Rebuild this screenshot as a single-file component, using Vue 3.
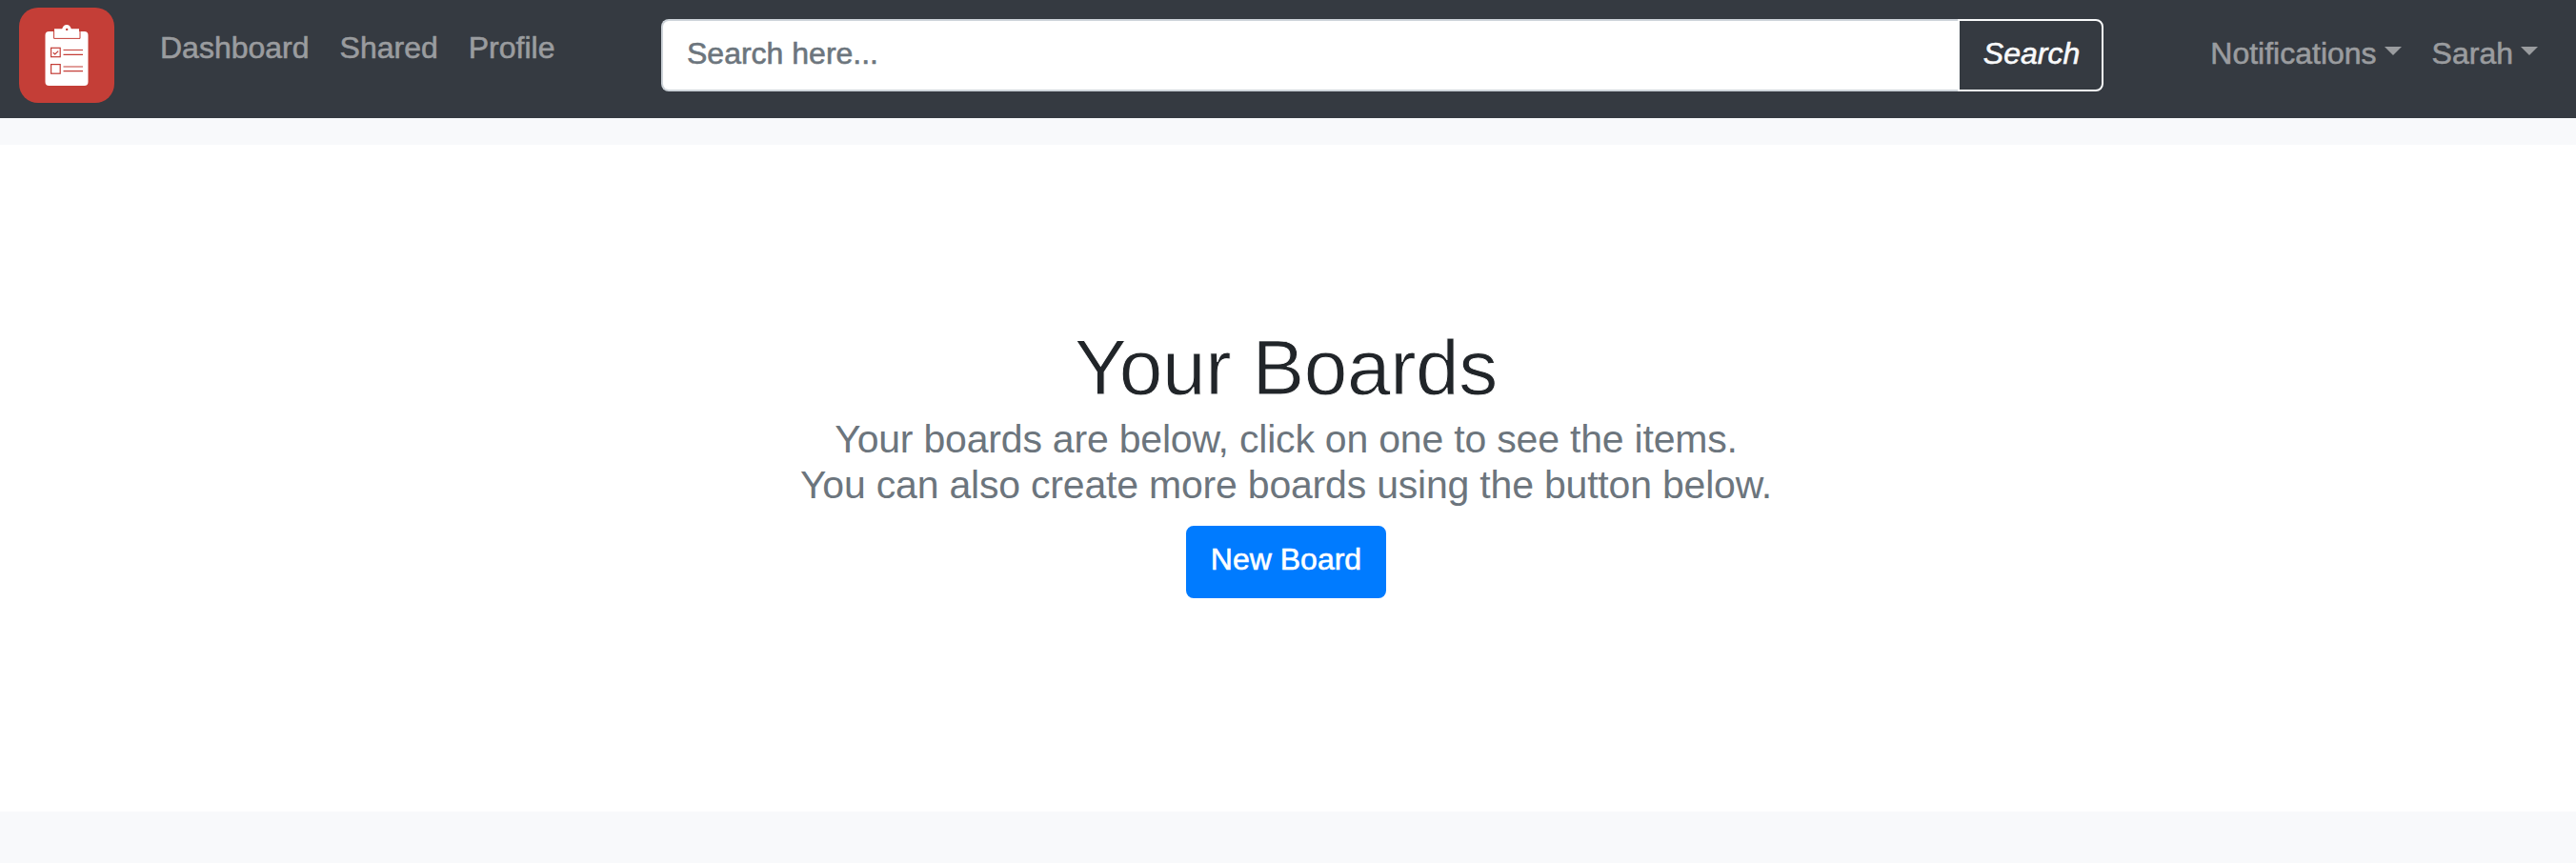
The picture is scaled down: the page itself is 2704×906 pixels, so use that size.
<script setup>
const links = ['Dashboard', 'Shared', 'Profile']
const menus = ['Notifications', 'Sarah']
</script>

<template>
  <div class="page">
    <nav class="navbar">
      <a class="brand" aria-label="Home">
        <svg width="100" height="100" viewBox="0 0 100 100">
          <rect width="100" height="100" rx="20" fill="#c43e37" />
          <rect x="27.5" y="25" width="45" height="57" rx="4" fill="#fff" />
          <path
            d="M37 22.2H45.2C46 19.5 47.7 18 50 18S54 19.5 54.8 22.2H63V31.8H37Z"
            fill="#fff"
          />
          <path d="M36.6 23.5V32.4H64V23.5" fill="none" stroke="#c43e37" stroke-width="1" stroke-linejoin="round" />
          <circle cx="50.2" cy="22.9" r="1.2" fill="#c43e37" />
          <g fill="none" stroke="#c43e37" stroke-width="1.2">
            <rect x="33.6" y="42.3" width="9.6" height="9.4" />
            <rect x="33.6" y="59.6" width="9.6" height="9.6" />
            <path d="M46.5 44.5H67M46.5 49.3H67M46.5 62H67M46.5 66.7H67" />
            <path d="M35.8 47.3L37.7 49L41.2 45.6" />
          </g>
        </svg>
      </a>
      <div class="links">
        <a v-for="link in links" :key="link" class="link">{{ link }}</a>
      </div>
      <form class="search" @submit.prevent>
        <input class="field" type="text" placeholder="Search here..." />
        <button class="submit" type="submit">Search</button>
      </form>
      <div class="menus">
        <a v-for="menu in menus" :key="menu" class="link menu">{{ menu }}<i class="caret"></i></a>
      </div>
    </nav>

    <section class="hero">
      <h1>Your Boards</h1>
      <p class="lead">
        Your boards are below, click on one to see the items.<br />
        You can also create more boards using the button below.
      </p>
      <button class="new">New Board</button>
    </section>
  </div>
</template>

<style>
body {
  margin: 0;
  background: #f8f9fb;
}
</style>

<style scoped>
.page {
  box-sizing: border-box;
  min-height: 906px;
  background: #f8f9fb;
  font: 32px/48px "Liberation Sans", Arial, sans-serif;
  color: #212529;
}
.page * {
  box-sizing: border-box;
}
.navbar {
  display: flex;
  align-items: flex-start;
  height: 124px;
  padding: 8px 40px 0 20px;
  background: #353a41;
}
.brand {
  display: block;
  width: 100px;
  height: 100px;
}
.brand svg {
  display: block;
}
.links {
  display: flex;
  gap: 32px;
  width: 526px;
  margin-left: 48px;
  padding-top: 18px;
}
.link {
  color: #9a9c9f;
  white-space: nowrap;
}
.link,
.submit,
.new,
.field::placeholder {
  -webkit-text-stroke: 0.6px currentColor;
}
.search {
  display: flex;
  width: 1514px;
  height: 76px;
  margin-top: 12px;
}
.field {
  flex: 1;
  min-width: 0;
  padding: 10px 24px 14px 25px;
  border: 2px solid #ced4da;
  border-right: 0;
  border-radius: 8px 0 0 8px;
  background: #fff;
  font: inherit;
  outline: 0;
}
.field::placeholder {
  color: #6c757d;
  opacity: 1;
}
.submit {
  width: 153px;
  padding: 10px 0 14px 2px;
  border: 2px solid #f8f9fa;
  border-radius: 0 8px 8px 0;
  background: transparent;
  font: inherit;
  font-style: italic;
  color: #f8f9fa;
}
.menus {
  display: flex;
  gap: 32px;
  margin-left: auto;
  padding-top: 24px;
}
.caret {
  display: inline-block;
  margin-left: 8px;
  border: 9px solid transparent;
  border-top-color: currentColor;
  border-bottom: 0;
  vertical-align: 9px;
}
.hero {
  display: flex;
  flex-direction: column;
  align-items: center;
  height: 700px;
  margin-top: 28px;
  padding: 186px 4px 0 0;
  background: #fff;
}
h1 {
  margin: 0;
  font-size: 82px;
  line-height: 96px;
  font-weight: 300;
  letter-spacing: -0.4px;
  -webkit-text-stroke: 0.9px #fff;
}
.lead {
  margin: 3px 0 19px;
  font-size: 41px;
  line-height: 48px;
  font-weight: 300;
  letter-spacing: -0.2px;
  color: #6c757d;
  text-align: center;
}
.new {
  width: 210px;
  height: 76px;
  padding: 9px 0 15px;
  border: 2px solid #007bff;
  border-radius: 8px;
  background: #007bff;
  font: inherit;
  color: #fff;
}
</style>
